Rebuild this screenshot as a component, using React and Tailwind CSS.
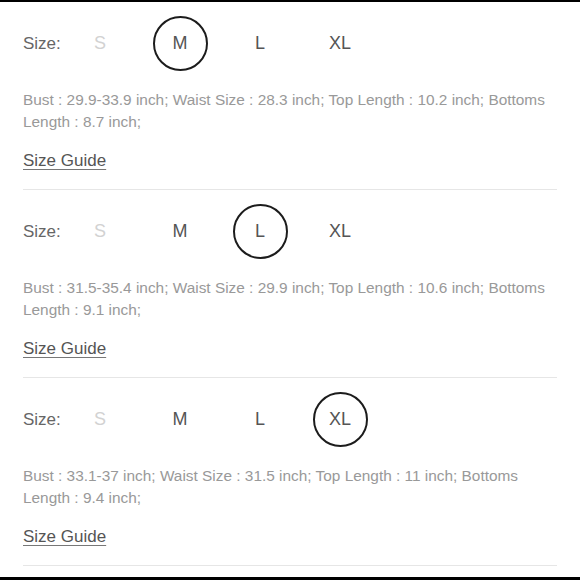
const sizes = ["S", "M", "L", "XL"];

const sections = [
  {
    selected: "M",
    spec: "Bust : 29.9-33.9 inch; Waist Size : 28.3 inch; Top Length : 10.2 inch; Bottoms Length : 8.7 inch;",
  },
  {
    selected: "L",
    spec: "Bust : 31.5-35.4 inch; Waist Size : 29.9 inch; Top Length : 10.6 inch; Bottoms Length : 9.1 inch;",
  },
  {
    selected: "XL",
    spec: "Bust : 33.1-37 inch; Waist Size : 31.5 inch; Top Length : 11 inch; Bottoms Length : 9.4 inch;",
  },
];

const SizeSection = ({ selected, spec }) => {
  return (
    <div className="pt-[14px] pb-[17px] border-b border-[#e6e6e6]">
      <div className="flex items-center h-[55px]">
        <div className="w-[37px] text-[17px] text-[#666]">Size:</div>
        {sizes.map((s) => (
          <div key={s} className="w-[80px] flex justify-center">
            <div
              className={`w-[55px] h-[55px] rounded-full flex items-center justify-center text-[18px] ${
                s === selected ? "border-[2.5px] border-[#1c1c1c]" : ""
              } ${s === "S" ? "text-[#d2d2d2]" : "text-[#555]"}`}
            >
              {s}
            </div>
          </div>
        ))}
      </div>
      <p className="mt-[18px] text-[15.4px] leading-[22px] text-[#999]">{spec}</p>
      <div className="mt-[17px] text-[17px] leading-[22px] text-[#555] underline underline-offset-[3px] decoration-[#777]">
        Size Guide
      </div>
    </div>
  );
};

export default function App() {
  return (
    <div
      className="w-[580px] h-[580px] bg-white border-t-2 border-b-[3px] border-black px-[23px] overflow-hidden"
      style={{ fontFamily: '"Liberation Sans", Arial, sans-serif' }}
    >
      {sections.map((sec) => (
        <SizeSection key={sec.selected} {...sec} />
      ))}
    </div>
  );
}
